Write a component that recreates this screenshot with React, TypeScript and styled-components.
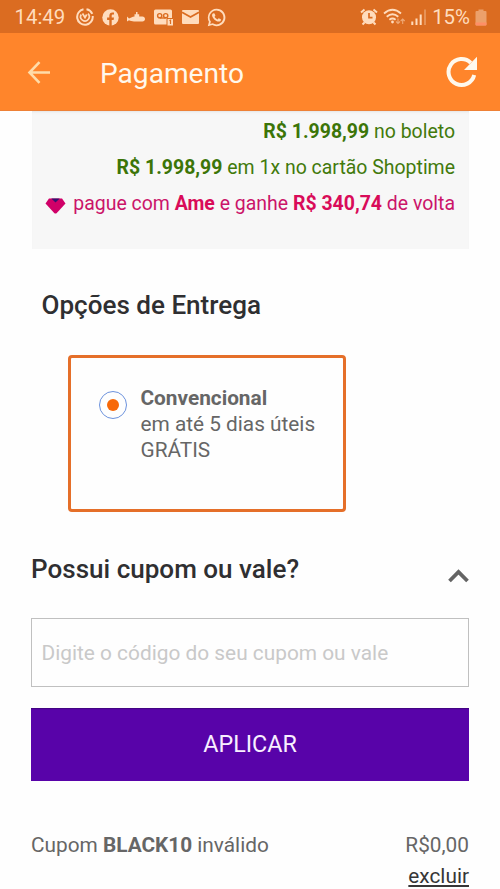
import React from 'react';
import styled, { createGlobalStyle } from 'styled-components';

const GlobalStyle = createGlobalStyle`
  * { box-sizing: border-box; }
  body { margin: 0; background: #fefefe; font-family: Roboto, sans-serif; overflow: hidden; }
`;

const Screen = styled.div`
  width: 500px;
  height: 889px;
  overflow: hidden;
  background: #fefefe;
  color: #666;
`;

const StatusBar = styled.header`
  display: flex;
  justify-content: space-between;
  align-items: center;
  height: 33px;
  padding: 1px 13px 0 14.5px;
  background: #db6c21;
  color: #ffdcbd;
`;

const StatusGroup = styled.div<{ $gap: number }>`
  display: flex;
  align-items: center;
  gap: ${(p) => p.$gap}px;
  font-size: 20.4px;
  line-height: 32px;
  svg { display: block; flex: none; }
`;

const Clock = styled.span`
  width: 53px;
`;

const AppBar = styled.div`
  display: flex;
  align-items: center;
  height: 78px;
  padding: 0 22px 0 27px;
  background: #ff852b;
  border-bottom: 1px solid #ee8136;
  color: #fff8ec;
  svg { display: block; flex: none; }
`;

const AppTitle = styled.h1`
  flex: 1;
  margin: 4px 0 0 49px;
  font-size: 28.1px;
  font-weight: 400;
  line-height: 40px;
`;

const Content = styled.main`
  padding: 0 31px;
`;

const Summary = styled.section`
  height: 138px;
  margin-left: 1px;
  padding: 3px 14px 0 0;
  background: #f7f7f7;
  box-shadow: inset 0 3px 3px -2px #e4e4e4;
`;

const PriceLine = styled.p<{ $accent?: boolean }>`
  display: flex;
  justify-content: flex-end;
  align-items: center;
  margin: 0;
  font-size: 19.47px;
  line-height: 36px;
  white-space: pre;
  color: ${(p) => (p.$accent ? '#cb1469' : '#427a0b')};
  b { font-weight: 700; color: ${(p) => (p.$accent ? '#d90b59' : '#3c7508')}; }
  svg { margin: 4px 7px 0 0; }
`;

const Heading = styled.h2`
  margin: 0;
  font-size: 26.05px;
  font-weight: 500;
  line-height: 32px;
  color: #2f2f31;
`;

const DeliveryHeading = styled(Heading)`
  margin: 40px 0 0 10.5px;
`;

const DeliveryCard = styled.section`
  display: flex;
  gap: 14px;
  width: 278px;
  height: 157px;
  margin: 34px 0 0 37px;
  padding: 27px 0 0 27.5px;
  border: 3px solid #e56f29;
  border-radius: 4px;
`;

const Radio = styled.span`
  display: grid;
  place-items: center;
  flex: none;
  width: 28px;
  height: 28px;
  margin-top: 6px;
  border: 1px solid #6c92dd;
  border-radius: 50%;
  &::after {
    content: '';
    width: 12px;
    height: 12px;
    border-radius: 50%;
    background: #f76808;
  }
`;

const DeliveryText = styled.div`
  font-size: 20.8px;
  line-height: 26px;
  white-space: nowrap;
  b { display: block; font-weight: 700; }
  span { display: block; }
`;

const CouponHeader = styled.div`
  display: flex;
  justify-content: space-between;
  height: 32px;
  margin-top: 41px;
  svg { margin-top: 16px; }
`;

const CouponInput = styled.input`
  display: block;
  width: 100%;
  height: 69px;
  margin: 33px 0 0;
  padding: 1px 9.5px 0;
  border: 1px solid #c0c0c0;
  border-radius: 0;
  outline: 0;
  background: #fefefe;
  font: 400 20.85px Roboto, sans-serif;
  &::placeholder { color: #c9c9c9; opacity: 1; }
`;

const ApplyButton = styled.button`
  display: block;
  width: 100%;
  height: 73px;
  margin: 21px 0 0;
  padding: 0 0 2px;
  border: 0;
  background: #5803a9;
  box-shadow: inset 0 2px 1px -1px #42057f;
  color: #f8efff;
  font: 400 23.3px Roboto, sans-serif;
`;

const CouponResult = styled.div`
  display: flex;
  justify-content: space-between;
  margin-top: 49px;
  font-size: 20.8px;
  line-height: 31px;
  b { font-weight: 700; }
`;

const CouponAmount = styled.div`
  display: flex;
  flex-direction: column;
  align-items: flex-end;
`;

const RemoveLink = styled.a`
  color: #363636;
  text-decoration: underline;
  text-decoration-thickness: 1.5px;
  text-underline-offset: 2px;
  text-decoration-skip-ink: none;
`;

const SwirlIcon = () => (
  <svg width="18" height="18" viewBox="0 0 18 18" fill="none" stroke="currentColor" strokeWidth="2">
    <path d="M7.5 1.3A7.8 7.8 0 1 0 16.7 8" />
    <path d="M10.5 1.3a7.8 7.8 0 0 1 5.8 4.5" />
    <path d="M5.2 6.5a4.3 4.3 0 1 0 6.8-.8M6.5 5.5 9 9.5l1.7-3" strokeWidth="1.7" />
  </svg>
);
const FacebookIcon = () => (
  <svg width="17" height="17" viewBox="0 0 17 17">
    <circle cx="8.5" cy="8.5" r="8.2" fill="currentColor" />
    <path d="M7.3 17v-6H5.1V8.5h2.2V6.8c0-2.3 1.3-3.4 3.2-3.4.8 0 1.5.1 1.5.1v2h-1c-1 0-1.3.6-1.3 1.3v1.7h2.3l-.4 2.5H9.7v6Z" fill="#db6c21" />
  </svg>
);
const SubmarineIcon = () => (
  <svg width="18" height="12" viewBox="0 0 18 12" fill="currentColor">
    <path d="M0 5.5 2 7.5l4-1.7 1.5-.2V3.2H9V1h1.5v2.2h1.7v2.4h3.3c1.4 0 2.5 1.1 2.5 2.4s-1.1 2.5-2.5 2.5H7C5 10.5 3.5 10 2 9.3L0 10.5Z" />
  </svg>
);
const VoicemailIcon = () => (
  <svg width="20" height="17" viewBox="0 0 20 17">
    <path d="M1.5.5h15Q18 .5 18 2v13.5H1.5Q0 15.5 0 14V2Q0 .5 1.5.5Z" fill="currentColor" />
    <g fill="none" stroke="#db6c21" strokeWidth="1.4">
      <circle cx="5.7" cy="6.7" r="2.1" />
      <circle cx="11.7" cy="6.7" r="2.1" />
      <path d="M5.7 9h6" />
    </g>
    <path d="M13 9.5h6.5V17H13Z" fill="currentColor" stroke="#db6c21" />
    <path d="m15.5 11.8 1-.6V15" fill="none" stroke="#db6c21" strokeWidth="1.2" />
  </svg>
);
const MailIcon = () => (
  <svg width="17" height="14" viewBox="0 0 17 14">
    <rect width="17" height="14" rx="1" fill="currentColor" />
    <path d="M0 2.2 8.5 7 17 2.2" fill="none" stroke="#db6c21" strokeWidth="1.7" />
  </svg>
);
const WhatsAppIcon = () => (
  <svg width="19" height="19" viewBox="0 0 24 24" fill="currentColor">
    <path d="M12 1a11 11 0 0 0-9.5 16.5L1 23l5.7-1.5A11 11 0 1 0 12 1Zm0 2.2a8.8 8.8 0 1 1-4.8 16.2l-3.1.8.8-3A8.8 8.8 0 0 1 12 3.2Z" />
    <path d="M8.3 6.5c-.8 0-1.9 1-1.9 2.5 0 3 4.5 8.2 8.4 8.2 1.5 0 2.9-1 2.9-2.5 0-.5-2.6-1.8-3-1.8-.5 0-1 1.6-1.5 1.6-.8 0-3.6-2.4-3.6-3.3 0-.4 1-1 1-1.6S9.4 6.5 9 6.5Z" />
  </svg>
);
const AlarmIcon = () => (
  <svg width="18" height="18" viewBox="0 0 18 18">
    <path d="M1 4.5 4.5 1.5M17 4.5l-3.500-3M4.500 14.500l-2 2M13.500 14.500l2 2" stroke="currentColor" strokeWidth="2" />
    <circle cx="9" cy="9.2" r="7" fill="currentColor" />
    <path d="M9 5v4.7h3.5" fill="none" stroke="#db6c21" strokeWidth="1.7" />
  </svg>
);
const WifiIcon = () => (
  <svg width="23" height="18" viewBox="0 0 23 18" fill="none" stroke="currentColor" strokeWidth="1.8">
    <path d="M1 5.5q8.5-7.5 17 0M3.7 8.7q5.8-5 11.6 0M6.4 11.7q3.1-2.5 6.2 0" />
    <circle cx="9.5" cy="14" r="1.4" fill="currentColor" stroke="none" />
    <path d="M15 10.5v5m-2-2 2 2 2-2M19.7 16v-5m-2 2 2-2 2 2" strokeWidth="1.1" opacity=".55" />
  </svg>
);
const SignalIcon = () => (
  <svg width="16" height="16" viewBox="0 0 16 16" fill="currentColor">
    <path d="M.3 12.5h2V16h-2ZM4.500 9.500h2V16h-2ZM8.700 5.500h2V16h-2Z" />
    <path d="M13 .5h2V16h-2Z" opacity=".35" />
  </svg>
);
const BatteryIcon = () => (
  <svg width="12" height="17" viewBox="0 0 12 17">
    <path d="M3.5.5h5V2H10.5Q11.5 2 11.5 3v12.5q0 1-1 1h-9q-1 0-1-1V3q0-1 1-1h2Z" fill="#eca06b" />
    <path d="M.5 13.5h11v2q0 1-1 1h-9q-1 0-1-1Z" fill="#ff8e66" />
  </svg>
);
const BackIcon = () => (
  <svg width="24" height="24" viewBox="0 0 24 24" fill="none" stroke="#ffdca9" strokeWidth="2.6">
    <path d="M23 12.5H3M12.5 2.2 2.5 12.5l10 10.3" />
  </svg>
);
const ReloadIcon = () => (
  <svg width="32" height="32" viewBox="0 0 32 32">
    <path d="M24.8 6.8A13 13 0 1 0 28.2 19" fill="none" stroke="currentColor" strokeWidth="4" />
    <path d="M31 .8V14H18Z" fill="currentColor" />
  </svg>
);
const AmeIcon = () => (
  <svg width="21" height="16" viewBox="0 0 21 16">
    <path d="M4 .5h13l3.5 5L11.8 15q-1.3 1-2.6 0L.5 5.5Z" fill="#d00068" />
    <path d="M6.3.5h8.4l-4.2 4Z" fill="#34116f" />
  </svg>
);
const ChevronUp = () => (
  <svg width="21" height="14" viewBox="0 0 21 14">
    <path d="m1.5 12 9-9 9 9" fill="none" stroke="#646464" strokeWidth="3.8" />
  </svg>
);

export default function App() {
  return (
    <Screen>
      <GlobalStyle />
      <StatusBar>
        <StatusGroup $gap={8.3}>
          <Clock>14:49</Clock>
          <SwirlIcon /><FacebookIcon /><SubmarineIcon /><VoicemailIcon /><MailIcon /><WhatsAppIcon />
        </StatusGroup>
        <StatusGroup $gap={5}>
          <AlarmIcon /><WifiIcon /><SignalIcon /><span>15%</span><BatteryIcon />
        </StatusGroup>
      </StatusBar>
      <AppBar>
        <BackIcon />
        <AppTitle>Pagamento</AppTitle>
        <ReloadIcon />
      </AppBar>
      <Content>
        <Summary>
          <PriceLine><b>R$ 1.998,99</b> no boleto</PriceLine>
          <PriceLine><b>R$ 1.998,99</b> em 1x no cartão Shoptime</PriceLine>
          <PriceLine $accent><AmeIcon />pague com <b>Ame</b> e ganhe <b>R$ 340,74</b> de volta</PriceLine>
        </Summary>
        <DeliveryHeading>Opções de Entrega</DeliveryHeading>
        <DeliveryCard>
          <Radio role="radio" aria-checked="true" />
          <DeliveryText>
            <b>Convencional</b>
            <span>em até 5 dias úteis</span>
            <span>GRÁTIS</span>
          </DeliveryText>
        </DeliveryCard>
        <CouponHeader>
          <Heading>Possui cupom ou vale?</Heading>
          <ChevronUp />
        </CouponHeader>
        <CouponInput placeholder="Digite o código do seu cupom ou vale" />
        <ApplyButton>APLICAR</ApplyButton>
        <CouponResult>
          <span>Cupom <b>BLACK10</b> inválido</span>
          <CouponAmount>
            <span>R$0,00</span>
            <RemoveLink>excluir</RemoveLink>
          </CouponAmount>
        </CouponResult>
      </Content>
    </Screen>
  );
}
